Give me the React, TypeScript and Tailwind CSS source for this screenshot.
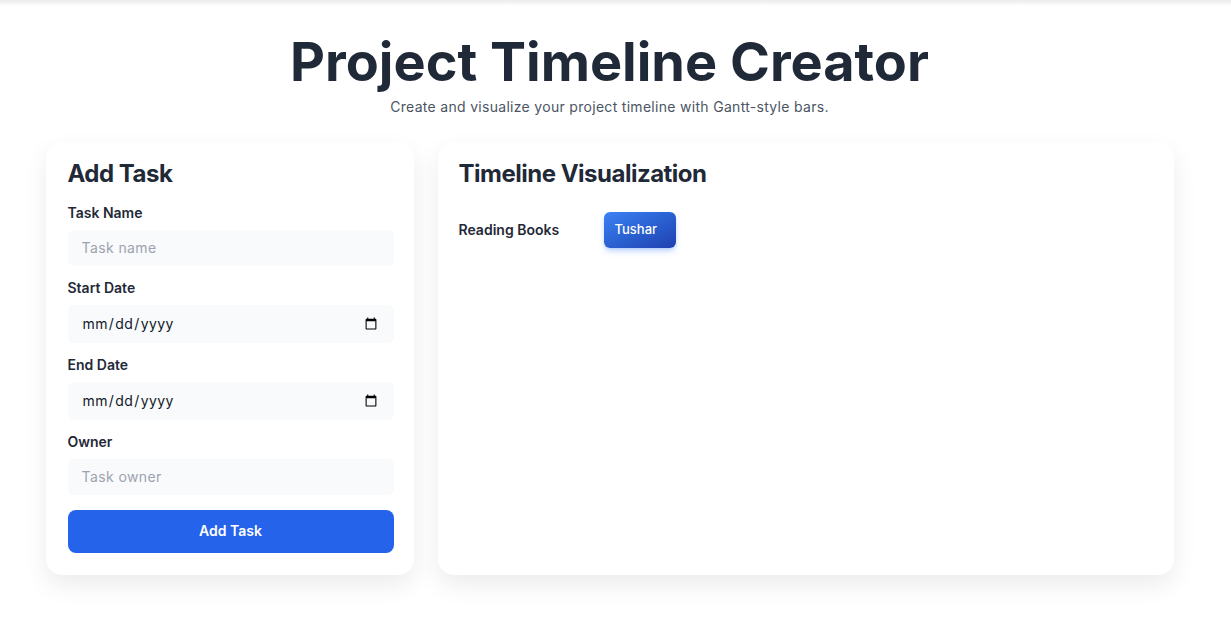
import { useState } from "react";

type Task = { name: string; start: string; end: string; owner: string };

const font = "font-['Inter','Noto_Sans',sans-serif]";

function Field({
  label,
  children,
}: {
  label: string;
  children: React.ReactNode;
}) {
  return (
    <div className="mb-3">
      <label className="mb-[7px] block text-[14px] font-semibold leading-5 text-[#1f2937]">
        {label}
      </label>
      {children}
    </div>
  );
}

const inputCls =
  "block w-full rounded-md bg-[#f9fafb] px-[14px] py-2 text-sm leading-5 tracking-[0.4px] text-gray-900 placeholder:text-[#9ca3af] outline-none";

export default function App() {
  const [tasks] = useState<Task[]>([
    { name: "Reading Books", start: "", end: "", owner: "Tushar" },
  ]);

  return (
    <div className={`${font} min-h-screen bg-white`}>
      <div className="h-[6px] bg-gradient-to-b from-black/[0.08] to-transparent" />
      <div className="pr-3">
        <header className="mt-6 text-center">
          <h1 className="text-[54px] font-bold leading-[1.2] text-[#1f2937]">
            Project Timeline Creator
          </h1>
          <p className="mt-[2px] text-sm leading-5 tracking-[0.3px] text-[#4b5563]">
            Create and visualize your project timeline with Gantt-style bars.
          </p>
        </header>

        <main className="mx-auto mt-[25px] grid max-w-[1128px] grid-cols-[1fr_2fr] gap-6">
          <section className="rounded-2xl bg-white py-[22px] pl-[22px] pr-[20px] shadow-[0_10px_25px_rgba(0,0,0,0.08)]">
            <h2 className="mb-[19px] text-[24px] font-bold leading-5 tracking-[-0.5px] text-[#1f2937]">
              Add Task
            </h2>
            <Field label="Task Name">
              <input className={inputCls} placeholder="Task name" />
            </Field>
            <Field label="Start Date">
              <input type="date" className={`${inputCls} h-[38px]`} />
            </Field>
            <Field label="End Date">
              <input type="date" className={`${inputCls} h-[38px]`} />
            </Field>
            <Field label="Owner">
              <input className={inputCls} placeholder="Task owner" />
            </Field>
            <button className="mt-[3px] h-[43px] w-full rounded-lg bg-[#2563eb] text-sm font-semibold text-white">
              Add Task
            </button>
          </section>

          <section className="rounded-2xl bg-white p-[21px] shadow-[0_10px_25px_rgba(0,0,0,0.08)]">
            <h2 className="mb-[28px] mt-px text-[24px] font-bold leading-5 tracking-[-0.5px] text-[#1f2937]">
              Timeline Visualization
            </h2>
            {tasks.map((t) => (
              <div key={t.name} className="flex items-center">
                <div className="w-[145px] shrink-0 text-[14px] font-semibold text-[#1f2937]">
                  {t.name}
                </div>
                <div className="flex h-9 w-[72px] items-center rounded-md bg-gradient-to-br from-[#3b82f6] to-[#1e40af] px-[11px] text-[13px] font-medium text-white shadow-md shadow-[#3b82f6]/30">
                  {t.owner}
                </div>
              </div>
            ))}
          </section>
        </main>
      </div>
    </div>
  );
}
